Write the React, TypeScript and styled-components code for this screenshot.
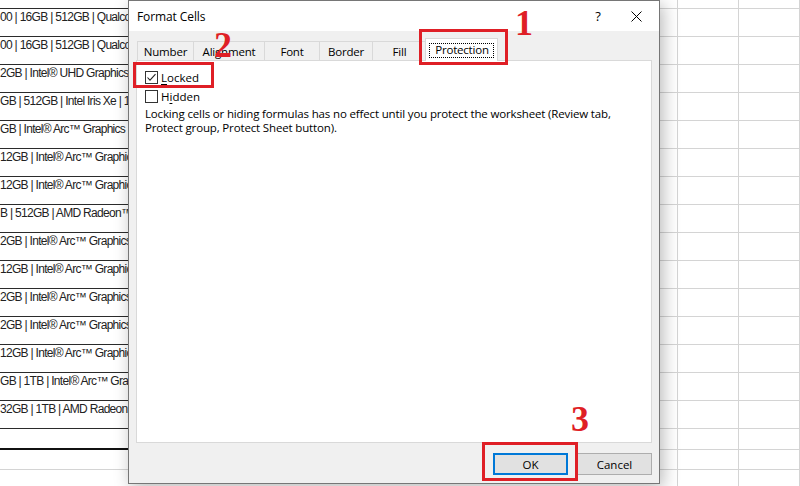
import React from "react";
import styled, { createGlobalStyle } from "styled-components";

const GlobalStyle = createGlobalStyle`
  html, body {
    margin: 0;
    padding: 0;
    width: 800px;
    height: 486px;
    overflow: hidden;
    background: #ffffff;
  }
  #root {
    width: 800px;
    height: 486px;
  }
`;

const UI_FONT = `"Open Sans", "Noto Sans", "Liberation Sans", sans-serif`;
const RED = "#df1f26";

/* ---------- spreadsheet behind the dialog ---------- */

const Screen = styled.div`
  position: relative;
  width: 800px;
  height: 486px;
  overflow: hidden;
  background: #ffffff;
`;

const Sheet = styled.div`
  display: flex;
  flex-direction: column;
  width: 100%;
`;

const SheetRow = styled.div<{ $h: number }>`
  display: flex;
  flex: none;
  height: ${(p) => p.$h}px;
`;

const SpecCell = styled.div<{ $line: string; $weight: number }>`
  box-sizing: border-box;
  flex: none;
  width: 617px;
  height: 100%;
  border-bottom: ${(p) => p.$weight}px solid ${(p) => p.$line};
  padding: 1px 0 0 0;
  font-family: "Liberation Sans", Arial, sans-serif;
  font-size: 12px;
  letter-spacing: -0.7px;
  line-height: 14px;
  color: #222222;
  white-space: nowrap;
  overflow: hidden;
`;

const GridCell = styled.div`
  box-sizing: border-box;
  flex: none;
  width: 61px;
  height: 100%;
  border-right: 1px solid #d4d4d4;
  border-bottom: 1px solid #d4d4d4;
`;

const specs = [
  "00 | 16GB | 512GB | Qualcomm Snapdragon",
  "00 | 16GB | 512GB | Qualcomm Snapdragon",
  "2GB | Intel® UHD Graphics | 15.6 inch",
  "GB | 512GB | Intel Iris Xe | 14 inch",
  "GB | Intel® Arc™ Graphics | 14 inch",
  "12GB | Intel® Arc™ Graphics | 14 inch",
  "12GB | Intel® Arc™ Graphics | 16 inch",
  "B | 512GB | AMD Radeon™ Graphics",
  "2GB | Intel® Arc™ Graphics | 14 inch",
  "12GB | Intel® Arc™ Graphics | 16 inch",
  "2GB | Intel® Arc™ Graphics | 14 inch",
  "2GB | Intel® Arc™ Graphics | 16 inch",
  "12GB | Intel® Arc™ Graphics | 14 inch",
  "GB | 1TB | Intel® Arc™ Graphics | 16 inch",
  "32GB | 1TB | AMD Radeon™ Graphics",
];

type RowSpec = { h: number; text?: string; line: string; weight: number };

const rows: RowSpec[] = [
  { h: 9, line: "#2b2b2b", weight: 1 },
  ...specs.map((text) => ({ h: 28, text, line: "#2b2b2b", weight: 1 })),
  { h: 21, line: "#111111", weight: 2 },
  { h: 20, line: "#d4d4d4", weight: 1 },
  { h: 20, line: "#d4d4d4", weight: 1 },
];

/* ---------- Format Cells dialog ---------- */

const Dialog = styled.div`
  position: absolute;
  z-index: 1;
  left: 128px;
  top: 0;
  width: 532px;
  height: 484px;
  box-sizing: border-box;
  display: flex;
  flex-direction: column;
  background: #f0f0f0;
  border: 1px solid #767676;
  box-shadow: 3px 4px 16px rgba(0, 0, 0, 0.28);
  font-family: ${UI_FONT};
  font-size: 11.5px;
  color: #000000;
`;

const TitleBar = styled.div`
  flex: none;
  height: 30px;
  display: flex;
  align-items: center;
  background: #ffffff;
  padding-left: 8px;
`;

const Title = styled.div`
  flex: 1;
  font-size: 12px;
  letter-spacing: -0.1px;
`;

const TitleButton = styled.div<{ $w: number }>`
  width: ${(p) => p.$w}px;
  height: 30px;
  display: flex;
  align-items: center;
  justify-content: center;
  font-size: 13px;
`;

const Body = styled.div`
  flex: 1;
  display: flex;
  flex-direction: column;
  padding: 7px 7px 0 7px;
`;

const TabStrip = styled.div`
  display: flex;
  align-items: flex-end;
  height: 23px;
  padding-left: 1px;
  position: relative;
  z-index: 1;
  margin-bottom: -1px;
`;

const Tab = styled.div<{ $w: number; $active?: boolean }>`
  box-sizing: border-box;
  width: ${(p) => p.$w}px;
  height: ${(p) => (p.$active ? 23 : 20)}px;
  display: flex;
  align-items: center;
  justify-content: center;
  background: ${(p) => (p.$active ? "#ffffff" : "#f0f0f0")};
  border: 1px solid #d9d9d9;
  border-bottom: ${(p) => (p.$active ? "none" : "1px solid #d9d9d9")};
  margin-left: ${(p) => (p.$active ? "-2px" : "-1px")};
  padding-top: ${(p) => (p.$active ? "1px" : "0")};
  white-space: nowrap;
  letter-spacing: -0.2px;
  &:first-child {
    margin-left: 0;
  }
`;

const FocusLabel = styled.span`
  border: 1px dotted #000000;
  padding: 0 4px 1px 5px;
  line-height: 12px;
`;

const Panel = styled.div`
  flex: none;
  height: 383px;
  box-sizing: border-box;
  background: #ffffff;
  border: 1px solid #d9d9d9;
  padding: 7px 8px 0 8px;
  display: flex;
  flex-direction: column;
`;

const CheckRow = styled.label`
  display: flex;
  align-items: center;
  gap: 3px;
  height: 19px;
  line-height: 19px;
`;

const Box = styled.span`
  box-sizing: border-box;
  width: 13px;
  height: 13px;
  border: 1px solid #333333;
  background: #ffffff;
  display: flex;
  align-items: center;
  justify-content: center;
`;

const Underlined = styled.span`
  text-decoration: underline;
  text-underline-offset: 2px;
`;

const Description = styled.p`
  margin: 1px 0 0 0;
  line-height: 14px;
  letter-spacing: -0.15px;
`;

const Footer = styled.div`
  flex: 1;
  display: flex;
  justify-content: flex-end;
  align-items: flex-start;
  gap: 9px;
  padding-top: 10px;
  padding-right: 0;
`;

const Button = styled.div<{ $default?: boolean }>`
  box-sizing: border-box;
  width: 75px;
  height: 22px;
  display: flex;
  align-items: center;
  justify-content: center;
  background: #e1e1e1;
  border: ${(p) => (p.$default ? "2px solid #0078d7" : "1px solid #adadad")};
`;

/* ---------- red call-outs drawn over the screen ---------- */

const Callout = styled.div<{ $x: number; $y: number; $w: number; $h: number }>`
  position: absolute;
  z-index: 5;
  left: ${(p) => p.$x}px;
  top: ${(p) => p.$y}px;
  width: ${(p) => p.$w}px;
  height: ${(p) => p.$h}px;
  box-sizing: border-box;
  border: 3px solid ${RED};
`;

const StepNumber = styled.div<{ $x: number; $y: number }>`
  position: absolute;
  z-index: 5;
  left: ${(p) => p.$x}px;
  top: ${(p) => p.$y}px;
  font-family: "Liberation Serif", "Times New Roman", serif;
  font-weight: bold;
  font-size: 36px;
  line-height: 36px;
  color: ${RED};
`;

const tabs = [
  { label: "Number", w: 57 },
  { label: "Alignment", w: 72 },
  { label: "Font", w: 56 },
  { label: "Border", w: 54 },
  { label: "Fill", w: 55 },
];

const CheckMark = () => (
  <svg width="11" height="11" viewBox="0 0 11 11">
    <polyline points="1.5,5.5 4,8.2 9.5,2.2" fill="none" stroke="#222" strokeWidth="1.1" />
  </svg>
);

const CloseIcon = () => (
  <svg width="11" height="11" viewBox="0 0 11 11">
    <path d="M0.5 0.5 L10.5 10.5 M10.5 0.5 L0.5 10.5" stroke="#000" strokeWidth="1" />
  </svg>
);

export default function App() {
  return (
    <>
      <GlobalStyle />
      <Screen>
        <Sheet>
          {rows.map((r, i) => (
            <SheetRow key={i} $h={r.h}>
              <SpecCell $line={r.line} $weight={r.weight}>
                {r.text}
              </SpecCell>
              <GridCell />
              <GridCell />
              <GridCell />
            </SheetRow>
          ))}
        </Sheet>

        <Dialog>
          <TitleBar>
            <Title>Format Cells</Title>
            <TitleButton $w={30}>?</TitleButton>
            <TitleButton $w={46}>
              <CloseIcon />
            </TitleButton>
          </TitleBar>
          <Body>
            <TabStrip>
              {tabs.map((t) => (
                <Tab key={t.label} $w={t.w}>
                  {t.label}
                </Tab>
              ))}
              <Tab $w={73} $active>
                <FocusLabel>Protection</FocusLabel>
              </Tab>
            </TabStrip>
            <Panel>
              <CheckRow>
                <Box>
                  <CheckMark />
                </Box>
                <span>
                  <Underlined>L</Underlined>ocked
                </span>
              </CheckRow>
              <CheckRow>
                <Box />
                <span>
                  H<Underlined>i</Underlined>dden
                </span>
              </CheckRow>
              <Description>
                Locking cells or hiding formulas has no effect until you protect the worksheet (Review tab,
                <br />
                Protect group, Protect Sheet button).
              </Description>
            </Panel>
            <Footer>
              <Button $default>OK</Button>
              <Button>Cancel</Button>
            </Footer>
          </Body>
        </Dialog>

        <Callout $x={419} $y={29} $w={89} $h={36} />
        <StepNumber $x={515} $y={5}>1</StepNumber>
        <Callout $x={133} $y={62} $w={81} $h={26} />
        <StepNumber $x={214} $y={27}>2</StepNumber>
        <Callout $x={482} $y={442} $w={96} $h={39} />
        <StepNumber $x={571} $y={401}>3</StepNumber>
      </Screen>
    </>
  );
}
